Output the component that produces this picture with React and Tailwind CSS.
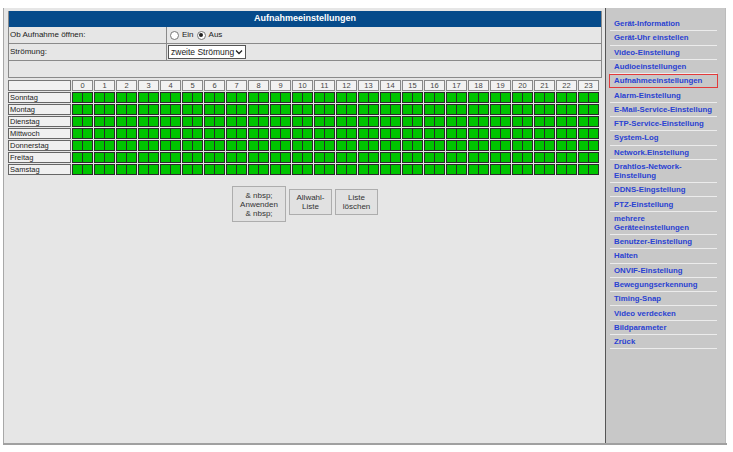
import React from "react";

const days = ["Sonntag", "Montag", "Dienstag", "Mittwoch", "Donnerstag", "Freitag", "Samstag"];
const hours = Array.from({ length: 24 }, (_, i) => i);
const links = [
  ["Gerät-Information"],
  ["Gerät-Uhr einstellen"],
  ["Video-Einstellung"],
  ["Audioeinstellungen"],
  ["Aufnahmeeinstellungen", true],
  ["Alarm-Einstellung"],
  ["E-Mail-Service-Einstellung"],
  ["FTP-Service-Einstellung"],
  ["System-Log"],
  ["Network.Einstellung"],
  ["Drahtlos-Network-\nEinstellung"],
  ["DDNS-Eingstellung"],
  ["PTZ-Einstellung"],
  ["mehrere\nGeräteeinstellungen"],
  ["Benutzer-Einstellung"],
  ["Halten"],
  ["ONVIF-Einstellung"],
  ["Bewegungserkennung"],
  ["Timing-Snap"],
  ["Video verdecken"],
  ["Bildparameter"],
  ["Zrück"],
];

function Radio({ checked }) {
  return (
    <span className="inline-flex w-[9px] h-[9px] rounded-full border border-[#777] bg-white items-center justify-center">
      {checked && <span className="w-[4px] h-[4px] rounded-full bg-[#222]" />}
    </span>
  );
}

export default function App() {
  return (
    <div className="w-[733px] h-[452px] bg-white pt-[8px] pl-[3px] font-['Liberation_Sans',Arial,sans-serif] text-[#222]">
      <div className="flex w-[724px] h-[437px] border-b-2 border-[#a0a0a0]">
        {/* main */}
        <div className="w-[602px] bg-[#e6e6e6] border-l border-[#a8a8a8] pl-[4px] pr-[3px] pt-[3px] flex flex-col">
          <div className="border border-[#8a8a8a] border-t-0">
            <div className="h-[16px] bg-[#064b8b] text-white font-bold text-[9px] flex items-center justify-center">
              Aufnahmeeinstellungen
            </div>
            <div className="flex h-[17px] border-b border-[#8a8a8a] text-[8px]">
              <div className="w-[158px] border-r border-[#8a8a8a] flex items-center pl-[1px]">Ob Aufnahme öffnen:</div>
              <div className="flex items-center pl-[3px] gap-[3px]">
                <Radio /> <span>Ein</span> <Radio checked /> <span>Aus</span>
              </div>
            </div>
            <div className="flex h-[17px] border-b border-[#8a8a8a] text-[8px]">
              <div className="w-[158px] border-r border-[#8a8a8a] flex items-center pl-[1px]">Strömung:</div>
              <div className="flex items-center pl-[1px]">
                <div className="h-[14px] w-[78px] bg-white border border-[#555] flex items-center justify-between px-[2px] text-[8.5px]">
                  <span>zweite Strömung</span>
                  <svg width="8" height="6" viewBox="0 0 8 6"><path d="M1 1.5 L4 4.5 L7 1.5" stroke="#222" strokeWidth="1.3" fill="none" /></svg>
                </div>
              </div>
            </div>
            <div className="h-[16px]" />
          </div>

          {/* schedule grid */}
          <div className="mt-[2px] mr-[3px] flex flex-col gap-[1px] text-[8px]">
            <div className="flex h-[11px] gap-[1px]">
              <div className="w-[63px] bg-[#f2f2f2] border border-[#777]" />
              {hours.map((h) => (
                <div key={h} className="flex-1 bg-[#f2f2f2] border border-[#888] flex items-center justify-center text-[7.5px] text-[#444]">
                  {h}
                </div>
              ))}
            </div>
            {days.map((d) => (
              <div key={d} className="flex h-[11px] gap-[1px] bg-[#e6e6e6]">
                <div className="w-[63px] bg-[#f0f0f0] border border-[#666] flex items-center pl-[1px] text-[7.5px]">{d}</div>
                {hours.map((h) => (
                  <div key={h} className="flex-1 flex bg-[#d9b6da]">
                    <div className="flex-1 bg-[#00c400] border border-[#2a2a2a]" />
                    <div className="flex-1 bg-[#00c400] border border-[#2a2a2a] border-l-0" />
                  </div>
                ))}
              </div>
            ))}
          </div>

          {/* buttons */}
          <div className="flex justify-center items-start gap-[3px] mt-[11px] text-[8px] text-[#333] leading-[9px]">
            <div className="w-[54px] h-[36px] bg-[#e1e1e1] border border-[#adadad] flex flex-col items-center justify-center text-center">
              <span>&amp; nbsp;</span>
              <span>Anwenden</span>
              <span>&amp; nbsp;</span>
            </div>
            <div className="mt-[3px] w-[43px] h-[26px] bg-[#e1e1e1] border border-[#adadad] flex flex-col items-center justify-center text-center">
              <span>Allwahl-</span>
              <span>Liste</span>
            </div>
            <div className="mt-[3px] w-[43px] h-[26px] bg-[#e1e1e1] border border-[#adadad] flex flex-col items-center justify-center text-center">
              <span>Liste</span>
              <span>löschen</span>
            </div>
          </div>
        </div>

        {/* sidebar */}
        <div className="w-[121px] bg-[#c8c8c8] border-l border-[#555] border-r border-r-[#bbb] pt-[9px] pl-[4px] pr-[8px]">
          {links.map(([t, active]) => (
            <div
              key={t}
              className={
                "border-b border-[#ececec] pt-[2.2px] pb-[2.1px] px-[4px] text-[7.8px] font-bold leading-[9px] text-[#2a42d2] whitespace-pre-line " +
                (active ? "outline outline-1 outline-[#e23a3a] -outline-offset-1 mx-[-1px] px-[5px]" : "")
              }
            >
              {t}
            </div>
          ))}
        </div>
      </div>
    </div>
  );
}
